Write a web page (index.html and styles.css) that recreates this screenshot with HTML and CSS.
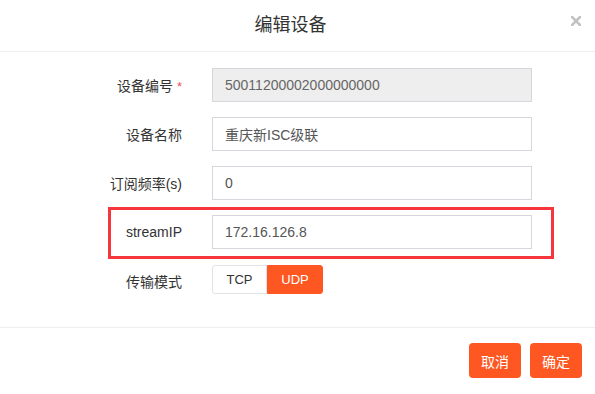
FILE: index.html
```html
<!DOCTYPE html>
<html lang="zh-CN">
<head>
    <meta charset="UTF-8">
    <meta name="viewport" content="width=device-width, initial-scale=1.0">
    <title>编辑设备</title>
    <link rel="stylesheet" href="styles.css">
</head>
<body>
    <div class="dialog">
        <div class="dialog-header">
            <h1>编辑设备</h1>
            <span class="close">
                <svg width="10" height="10" viewBox="0 0 10 10"><path d="M1 1 L9 9 M9 1 L1 9" stroke="#c2c2c2" stroke-width="2.6" stroke-linecap="square"/></svg>
            </span>
        </div>
        <form class="dialog-body">
            <div class="row">
                <label>设备编号 <span class="req">*</span></label>
                <input type="text" class="disabled" value="50011200002000000000" disabled>
            </div>
            <div class="row">
                <label>设备名称</label>
                <input type="text" value="重庆新ISC级联">
            </div>
            <div class="row">
                <label>订阅频率(s)</label>
                <input type="text" value="0">
            </div>
            <div class="row highlight">
                <label>streamIP</label>
                <input type="text" value="172.16.126.8">
            </div>
            <div class="row">
                <label>传输模式</label>
                <div class="switch">
                    <span class="opt">TCP</span>
                    <span class="opt active">UDP</span>
                </div>
            </div>
        </form>
        <div class="dialog-footer">
            <button class="btn">取消</button>
            <button class="btn">确定</button>
        </div>
    </div>
</body>
</html>
```

FILE: styles.css
```css
body {
    margin: 0;
    padding: 0;
    background-color: #fff;
    font-family: "Liberation Sans", "Noto Sans CJK SC", sans-serif;
    color: #333;
}
.dialog {
    width: 595px;
    height: 394px;
    background: #fff;
}
.dialog-header {
    height: 52px;
    border-bottom: 1px solid #eee;
    position: relative;
    box-sizing: border-box;
}
.dialog-header h1 {
    margin: 0;
    font-size: 18px;
    font-weight: normal;
    line-height: 50px;
    text-align: center;
    padding-right: 14px;
    color: #333;
}
.close {
    position: absolute;
    top: 16px;
    right: 14px;
    width: 10px;
    height: 10px;
    display: block;
}
.close svg {
    display: block;
}
.dialog-body {
    padding-top: 16px;
    height: 275px;
    box-sizing: border-box;
    margin: 0;
}
.row {
    display: flex;
    align-items: center;
    height: 34px;
    margin-bottom: 15px;
}
.row label {
    width: 182px;
    text-align: right;
    font-size: 14px;
    color: #333;
    flex-shrink: 0;
}
.req {
    color: #f0505a;
    font-size: 13px;
}
.row input {
    margin-left: 30px;
    width: 320px;
    height: 34px;
    box-sizing: border-box;
    border: 1px solid #d6d6dc;
    padding: 0 12px;
    font-size: 14px;
    font-family: inherit;
    color: #555;
    background: #fff;
    outline: none;
}
.row input.disabled {
    background: #eee;
    color: #666;
}
/* 标注框 */
.highlight {
    position: relative;
}
.highlight::after {
    content: "";
    position: absolute;
    top: -8px;
    bottom: -10px;
    left: 108px;
    width: 446px;
    border: 3px solid #f5363c;
    box-sizing: border-box;
}
.switch {
    margin-left: 30px;
    display: flex;
    height: 29px;
    margin-top: -3px;
}
.opt {
    width: 55px;
    box-sizing: border-box;
    text-align: center;
    font-size: 13px;
    line-height: 27px;
    color: #333;
    border: 1px solid #e2e2e2;
    border-radius: 3px 0 0 3px;
}
.opt.active {
    width: 56px;
    background: #ff5722;
    border-color: #ff5722;
    color: #fff;
    border-radius: 0 3px 3px 0;
}
.dialog-footer {
    border-top: 1px solid #eee;
    display: flex;
    justify-content: flex-end;
    gap: 9px;
    padding: 15px 13px 0 0;
}
.btn {
    width: 52px;
    height: 35px;
    border: none;
    border-radius: 4px;
    background: #ff5722;
    color: #fff;
    font-size: 14px;
    font-family: inherit;
    cursor: pointer;
}
```
